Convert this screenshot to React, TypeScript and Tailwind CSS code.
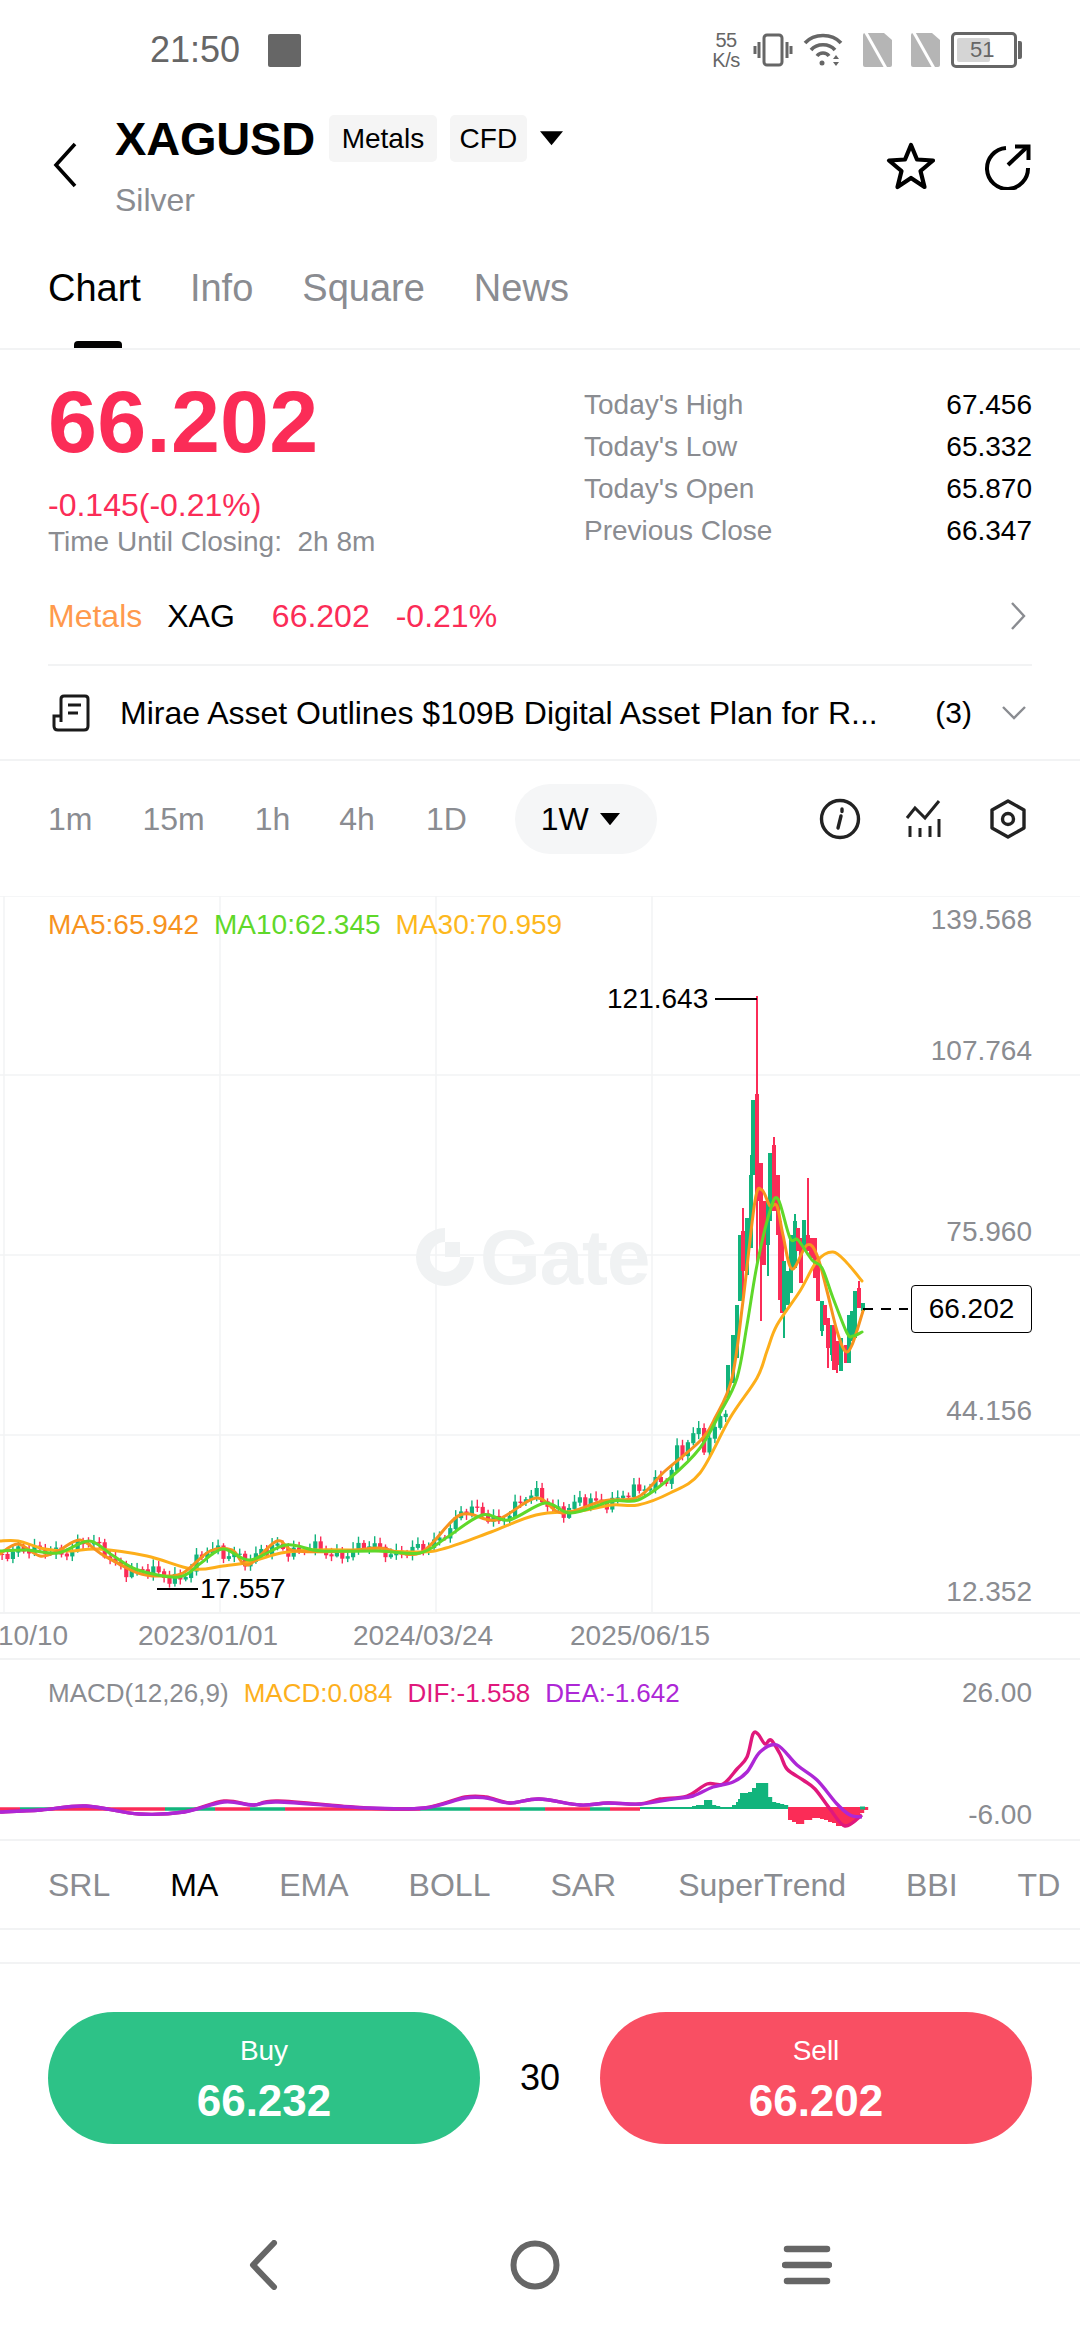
import React from "react";

type P = [number, number];

function smooth(pts: P[]): string {
  let d = `M${pts[0][0]} ${pts[0][1]}`;
  for (let i = 0; i < pts.length - 1; i++) {
    const p0 = pts[Math.max(0, i - 1)];
    const p1 = pts[i];
    const p2 = pts[i + 1];
    const p3 = pts[Math.min(pts.length - 1, i + 2)];
    const c1x = p1[0] + (p2[0] - p0[0]) / 6;
    const c1y = p1[1] + (p2[1] - p0[1]) / 6;
    const c2x = p2[0] - (p3[0] - p1[0]) / 6;
    const c2y = p2[1] - (p3[1] - p1[1]) / 6;
    d += `C${c1x.toFixed(1)} ${c1y.toFixed(1)} ${c2x.toFixed(1)} ${c2y.toFixed(1)} ${p2[0]} ${p2[1]}`;
  }
  return d;
}

function interp(pts: P[], x: number): number {
  for (let i = 0; i < pts.length - 1; i++) {
    if (x >= pts[i][0] && x <= pts[i + 1][0]) {
      const t = (x - pts[i][0]) / (pts[i + 1][0] - pts[i][0]);
      return pts[i][1] + t * (pts[i + 1][1] - pts[i][1]);
    }
  }
  return pts[pts.length - 1][1];
}

const ma5: P[] = [[0,1556],[18,1546],[40,1558],[58,1553],[80,1542],[103,1557],[138,1575],[161,1578],[183,1575],[210,1553],[232,1552],[248,1567],[277,1543],[295,1553],[348,1553],[379,1550],[420,1555],[460,1517],[496,1522],[536,1500],[562,1515],[603,1503],[638,1499],[665,1473],[700,1443],[715,1420],[732,1380],[743,1303],[755,1203],[762,1192],[770,1208],[777,1208],[783,1237],[792,1271],[807,1247],[817,1257],[827,1293],[837,1333],[845,1353],[852,1347],[863,1313]];
const ma10: P[] = [[0,1553],[27,1552],[58,1555],[89,1543],[112,1557],[138,1572],[179,1579],[201,1565],[223,1551],[250,1562],[286,1547],[321,1553],[379,1553],[420,1555],[446,1540],[482,1517],[509,1522],[545,1505],[571,1515],[612,1503],[638,1502],[670,1480],[700,1450],[720,1415],[737,1380],[747,1327],[757,1267],[770,1213],[778,1201],[790,1240],[798,1242],[812,1262],[822,1270],[833,1300],[847,1335],[853,1338],[862,1334]];
const ma30: P[] = [[0,1543],[18,1543],[45,1551],[71,1553],[98,1551],[147,1558],[192,1571],[223,1568],[250,1564],[281,1555],[312,1552],[357,1552],[420,1554],[446,1550],[491,1534],[536,1517],[580,1513],[612,1507],[638,1507],[670,1495],[700,1475],[730,1420],[757,1380],[767,1353],[777,1327],[800,1293],[817,1263],[833,1254],[847,1265],[862,1283]];

const dif: P[] = [[0,1815],[41,1813],[86,1809],[139,1817],[184,1815],[224,1804],[253,1808],[278,1804],[367,1811],[424,1811],[465,1800],[486,1800],[510,1806],[539,1802],[580,1808],[608,1806],[640,1807],[660,1802],[687,1799],[707,1787],[723,1787],[737,1772],[747,1760],[753,1737],[758,1737],[765,1747],[771,1743],[780,1757],[787,1772],[803,1783],[815,1792],[830,1812],[845,1829],[862,1818]];
const dea: P[] = [[0,1815],[41,1813],[86,1809],[139,1817],[184,1815],[224,1805],[253,1808],[278,1805],[367,1811],[424,1811],[465,1801],[486,1801],[510,1806],[539,1802],[580,1808],[608,1806],[640,1807],[673,1802],[693,1799],[713,1790],[733,1785],[747,1775],[760,1755],[777,1748],[797,1768],[817,1783],[837,1807],[850,1818],[862,1820]];

const G = "#12b47c";
const R = "#fb2c57";

// x, bodyTop, bodyBottom, colour, wickTop, wickBottom
const peak: [number, number, number, string, number, number][] = [
  [728,1367,1400,G,1367,1400],[733,1337,1385,G,1337,1385],[737,1307,1360,G,1307,1360],[740,1237,1303,G,1237,1303],
  [743,1233,1273,R,1210,1300],[747,1220,1277,G,1220,1277],[751,1177,1250,G,1157,1250],[753,1102,1177,G,1102,1177],
  [757,1096,1203,R,998,1267],[761,1165,1260,R,1165,1323],[764,1203,1267,R,1203,1267],[768,1200,1247,G,1200,1278],
  [770,1155,1223,G,1155,1223],[774,1147,1213,R,1139,1213],[778,1177,1237,R,1177,1237],[780,1223,1302,R,1223,1302],
  [782,1237,1315,R,1237,1315],[784,1263,1313,G,1263,1340],[788,1273,1307,G,1273,1307],[791,1237,1295,G,1237,1295],
  [795,1223,1270,G,1216,1270],[798,1230,1253,R,1230,1253],[801,1240,1285,R,1240,1285],[804,1222,1250,G,1222,1250],
  [808,1237,1253,R,1180,1253],[811,1240,1260,R,1240,1260],[815,1240,1280,R,1240,1280],[818,1260,1303,R,1260,1303],
  [822,1303,1333,G,1303,1338],[825,1307,1327,R,1307,1327],[828,1320,1350,R,1320,1370],[832,1327,1357,G,1327,1363],
  [834,1327,1372,R,1327,1372],[837,1343,1367,R,1343,1375],[841,1340,1373,G,1340,1373],[846,1347,1365,R,1347,1365],
  [849,1317,1365,G,1317,1365],[852,1313,1343,G,1313,1343],[855,1293,1340,G,1293,1340],[859,1290,1310,R,1283,1310],
  [863,1305,1313,G,1305,1313],
];

function buildCandles() {
  const out: { x: number; t: number; b: number; c: string; wt: number; wb: number }[] = [];
  let prev = interp(ma5, 0);
  let i = 0;
  for (let x = 0; x < 726; x += 5.4) {
    const slope = x > 660 ? 2.2 : 1;
    const close =
      interp(ma5, x) - (x > 440 && x < 700 ? 3 : 0) +
      (Math.sin(i * 1.7) * 4 + Math.sin(i * 0.63) * 5 + Math.sin(i * 3.1) * 2) * slope;
    const t = Math.min(prev, close);
    const b = Math.max(prev, close) + 1;
    out.push({
      x,
      t,
      b,
      c: close < prev ? G : R,
      wt: t - 2 - Math.abs(Math.sin(i * 2.3)) * 5,
      wb: b + 1 + Math.abs(Math.cos(i * 1.9)) * 4,
    });
    prev = close;
    i++;
  }
  return out;
}
const candles = buildCandles();

const hist: [number, number][] = [
  [640,1],[644,1],[648,1],[652,1],[656,1],[660,1],[664,1],[668,1],[672,1],[676,1],[680,1],[684,1],[688,1],[692,2],[696,3],[700,3],[704,8],[708,8],[712,3],[716,2],[720,1],[724,1],[728,1],[732,3],[736,6],[738,9],[740,15],[744,15],[748,16],[752,20],[756,25],[760,25],[764,25],[768,11],[772,6],[776,5],[780,4],[784,3],
  [788,-12],[792,-14],[796,-16],[800,-16],[804,-12],[808,-12],[812,-10],[816,-10],[820,-11],[824,-12],[828,-14],[832,-15],[836,-18],[840,-18],[844,-17],[848,-17],[852,-14],[856,-8],[860,-5],[864,-2],
];

const labelGray = "text-[#8a8c91]";

function Back() {
  return (
    <svg width="30" height="48" viewBox="0 0 30 48" fill="none">
      <path d="M25 3 L6 24 L25 45" stroke="#000" strokeWidth="3.6" />
    </svg>
  );
}

function Star() {
  return (
    <svg width="52" height="50" viewBox="0 0 52 50" fill="none">
      <path d="M26 4 L32 18.5 L48 19.5 L35.5 30 L39.5 46 L26 37 L12.5 46 L16.5 30 L4 19.5 L20 18.5 Z" stroke="#000" strokeWidth="4.2" strokeLinejoin="round" />
    </svg>
  );
}

function Share() {
  return (
    <svg width="48" height="46" viewBox="0 0 48 46" fill="none" stroke="#000" strokeWidth="4">
      <path d="M22 4 A20.5 20.5 0 1 0 44 24" />
      <path d="M24 21 L43 3" />
      <path d="M31 2.5 H44.5 V16" />
    </svg>
  );
}

function StatusIcons() {
  const c = "#666";
  return (
    <div className="flex items-center">
      <div className="w-[38px] flex flex-col items-center text-[20px] leading-[20px] text-[#666] tracking-tight">
        <span>55</span>
        <span>K/s</span>
      </div>
      <svg className="ml-[8px]" width="40" height="36" viewBox="0 0 40 36" fill="none" stroke={c} strokeWidth="3">
        <rect x="11" y="3" width="18" height="30" rx="3" />
        <path d="M6 10 V26 M2 14 V22 M34 10 V26 M38 14 V22" />
      </svg>
      <svg className="ml-[10px]" width="40" height="36" viewBox="0 0 40 36" fill="none" stroke={c} strokeWidth="3.6">
        <path d="M2 11 C11 1 29 1 38 11" />
        <path d="M8 18 C14 11 26 11 32 18" />
        <path d="M14 24 C17 20 23 20 26 24" />
        <circle cx="19" cy="31" r="2.5" fill={c} stroke="none" />
        <path d="M30 27 L33 23 L36 27 Z M30 30 L33 34 L36 30 Z" fill={c} stroke="none" />
      </svg>
      <svg className="ml-[18px]" width="34" height="36" viewBox="0 0 34 36" fill="none">
        <path d="M2 3 Q2 1 4 1 H23 L31 8 V33 Q31 35 29 35 H4 Q2 35 2 33 Z" fill="#b5b5b5" />
        <path d="M4 -1 L26 38" stroke="#fff" strokeWidth="3" />
      </svg>
      <svg className="ml-[14px]" width="34" height="36" viewBox="0 0 34 36" fill="none">
        <path d="M2 3 Q2 1 4 1 H23 L31 8 V33 Q31 35 29 35 H4 Q2 35 2 33 Z" fill="#b5b5b5" />
        <path d="M4 -1 L26 38" stroke="#fff" strokeWidth="3" />
      </svg>
      <div className="ml-[8px] flex items-center">
        <div className="relative w-[66px] h-[36px] rounded-[5px] border-[3px] border-[#666] flex items-center overflow-hidden">
          <div className="w-[33px] h-[24px] ml-[3px] bg-[#d5d5d5] rounded-[2px]" />
          <span className="absolute left-[16px] top-[3px] text-[22px] leading-[24px] text-[#666]">51</span>
        </div>
        <div className="ml-[1px] w-[4px] h-[18px] bg-[#666] rounded-r-[2px]" />
      </div>
    </div>
  );
}

function Caret({ s = 23 }: { s?: number }) {
  return (
    <svg width={s} height={s * 0.62} viewBox="0 0 23 14">
      <path d="M0 0 H23 L11.5 14 Z" fill="#000" />
    </svg>
  );
}

function Stat({ l, v }: { l: string; v: string }) {
  return (
    <div className="flex justify-between h-[42px] items-center text-[28px]">
      <span className={labelGray}>{l}</span>
      <span className="text-black">{v}</span>
    </div>
  );
}

function MainChart() {
  return (
    <div className="relative h-[718px] border-b-2 border-[#f2f3f4]">
      <svg className="absolute left-0 top-0" width="1080" height="718" viewBox="0 898 1080 718" fill="none">
        {[898, 1077, 1257, 1437].map((y) => (
          <path key={y} d={`M0 ${y} H1080`} stroke="#f2f3f4" strokeWidth="1.5" />
        ))}
        {[4, 220, 436, 652].map((x) => (
          <path key={x} d={`M${x} 898 V1616`} stroke="#f2f3f4" strokeWidth="1.5" />
        ))}
        {candles.map((k, i) => (
          <g key={i}>
            <rect x={k.x + 1.4} y={k.wt} width="1.4" height={k.wb - k.wt} fill={k.c} />
            <rect x={k.x} y={k.t} width="4.2" height={k.b - k.t} fill={k.c} />
          </g>
        ))}
        {peak.map(([x, t, b, c, wt, wb], i) => (
          <g key={i}>
            <rect x={x - 1} y={wt} width="2" height={wb - wt} fill={c} />
            <rect x={x - 2} y={t} width="4" height={b - t} fill={c} />
          </g>
        ))}
        <path d={smooth(ma30)} stroke="#fdae1a" strokeWidth="3" strokeLinejoin="round" strokeLinecap="round" />
        <path d={smooth(ma5)} stroke="#f7931e" strokeWidth="3" strokeLinejoin="round" strokeLinecap="round" />
        <path d={smooth(ma10)} stroke="#5fd82a" strokeWidth="3" strokeLinejoin="round" strokeLinecap="round" />
        <path d="M715 1001 H757" stroke="#000" strokeWidth="2" />
        <path d="M157 1591 H198" stroke="#000" strokeWidth="2" />
        <path d="M863 1311 H908" stroke="#000" strokeWidth="2" strokeDasharray="10 8" />
      </svg>

      <div className="absolute left-[416px] top-[322px] flex items-center gap-[6px] text-[#f0f2f3]">
        <svg width="58" height="58" viewBox="0 0 58 58">
          <path d="M29 0 A29 29 0 1 0 58 29 H44 A15 15 0 1 1 29 14 Z" fill="#f0f2f3" />
          <rect x="29" y="14" width="15" height="15" fill="#f0f2f3" />
        </svg>
        <span className="text-[78px] leading-[78px] font-bold tracking-[-1px]">Gate</span>
      </div>

      <div className="absolute left-[48px] top-[12px] flex gap-[15px] text-[28px] leading-[34px]">
        <span className="text-[#f7931e]">MA5:65.942</span>
        <span className="text-[#5fd82a]">MA10:62.345</span>
        <span className="text-[#fdb81d]">MA30:70.959</span>
      </div>

      {[
        ["139.568", 7],
        ["107.764", 138],
        ["75.960", 319],
        ["44.156", 498],
        ["12.352", 679],
      ].map(([t, top]) => (
        <span key={t as string} className={`absolute right-[48px] text-[28px] leading-[34px] ${labelGray}`} style={{ top: top as number }}>
          {t}
        </span>
      ))}

      <span className="absolute left-[607px] top-[86px] text-[28px] leading-[34px] text-black">121.643</span>
      <span className="absolute left-[200px] top-[676px] text-[28px] leading-[34px] text-black">17.557</span>
      <div className="absolute left-[911px] top-[389px] w-[121px] h-[48px] border-[1.5px] border-black rounded-[4px] bg-white flex items-center justify-center text-[28px] text-black">
        66.202
      </div>
    </div>
  );
}

function Macd() {
  return (
    <div className="relative h-[181px] border-b-2 border-[#f2f3f4]">
      <svg className="absolute left-0 top-0" width="1080" height="181" viewBox="0 1663 1080 181" fill="none">
        {[
          [0, 20, R], [20, 50, G], [50, 165, R], [165, 215, G], [215, 250, R], [250, 285, G], [285, 420, R], [420, 470, G], [470, 520, R], [520, 545, G], [545, 590, R], [590, 610, G], [610, 640, R],
        ].map(([a, b, c], i) => (
          <path key={i} d={`M${a} 1812 H${b}`} stroke={c as string} strokeWidth="3.5" />
        ))}
        {hist.map(([x, h], i) => (
          <rect key={i} x={x} y={h >= 0 ? 1811 - h : 1810} width="4.2" height={Math.abs(h) + 1} fill={h >= 0 ? G : R} />
        ))}
        <path d="M860 1811 H865" stroke={G} strokeWidth="3" />
        <path d={smooth(dif)} stroke="#e0187c" strokeWidth="3.4" strokeLinejoin="round" />
        <path d={smooth(dea)} stroke="#ad27d6" strokeWidth="3.4" strokeLinejoin="round" />
      </svg>
      <div className="absolute left-[48px] top-[18px] flex gap-[15px] text-[26px] leading-[30px]">
        <span className={labelGray}>MACD(12,26,9)</span>
        <span className="text-[#fdb01d]">MACD:0.084</span>
        <span className="text-[#e0187c]">DIF:-1.558</span>
        <span className="text-[#ad27d6]">DEA:-1.642</span>
      </div>
      <span className={`absolute right-[48px] top-[18px] text-[28px] leading-[30px] ${labelGray}`}>26.00</span>
      <span className={`absolute right-[48px] top-[140px] text-[28px] leading-[30px] ${labelGray}`}>-6.00</span>
    </div>
  );
}

export default function App() {
  const fam = "font-['Liberation_Sans',Arial,sans-serif]";
  return (
    <div className={`w-[1080px] h-[2340px] bg-white overflow-hidden flex flex-col ${fam}`}>
      {/* status bar */}
      <div className="h-[100px] shrink-0 flex items-center pl-[150px] pr-[58px]">
        <span className="text-[36px] text-[#666] font-medium">21:50</span>
        <div className="ml-[28px] w-[33px] h-[33px] bg-[#666] rounded-[2px]" />
        <div className="ml-auto">
          <StatusIcons />
        </div>
      </div>

      {/* header */}
      <div className="h-[130px] shrink-0 flex pl-[50px] pr-[48px]">
        <div className="mt-[41px] w-[30px]">
          <Back />
        </div>
        <div className="ml-[35px] flex flex-col">
          <div className="flex items-center mt-[15px] h-[47px]">
            <span className="text-[47px] leading-[47px] font-bold text-black tracking-[-0.2px]">XAGUSD</span>
            <span className="ml-[14px] h-[47px] w-[108px] bg-[#f5f5f5] rounded-[5px] flex items-center justify-center text-[28px] text-black">Metals</span>
            <span className="ml-[13px] h-[47px] w-[77px] bg-[#f5f5f5] rounded-[5px] flex items-center justify-center text-[28px] text-black">CFD</span>
            <span className="ml-[13px] flex"><Caret /></span>
          </div>
          <span className={`mt-[20px] text-[32px] leading-[36px] ${labelGray}`}>Silver</span>
        </div>
        <div className="ml-auto flex items-start mt-[41px]">
          <Star />
          <div className="ml-[47px] mt-[3px]"><Share /></div>
        </div>
      </div>

      {/* tabs */}
      <div className="h-[120px] shrink-0 relative border-b-2 border-[#f2f3f4] flex items-start gap-[49px] px-[48px] pt-[36px] text-[38px] leading-[44px]">
        <span className="text-black">Chart</span>
        <span className={labelGray}>Info</span>
        <span className={labelGray}>Square</span>
        <span className={labelGray}>News</span>
        <div className="absolute left-[74px] bottom-0 w-[48px] h-[7px] bg-black rounded-t-[4px]" />
      </div>

      {/* summary */}
      <div className="h-[188px] shrink-0 flex px-[48px]">
        <div className="w-[536px] flex flex-col">
          <span className="mt-[32px] text-[88px] leading-[80px] font-bold text-[#fb2c57] tracking-[0.2px]">66.202</span>
          <span className="mt-[25px] text-[32px] leading-[36px] text-[#fb2c57]">-0.145(-0.21%)</span>
          <span className={`mt-[2px] text-[28px] leading-[34px] ${labelGray}`}>Time Until Closing:&nbsp; 2h 8m</span>
        </div>
        <div className="flex-1 pt-[34px]">
          <Stat l="Today's High" v="67.456" />
          <Stat l="Today's Low" v="65.332" />
          <Stat l="Today's Open" v="65.870" />
          <Stat l="Previous Close" v="66.347" />
        </div>
      </div>

      {/* metals row */}
      <div className="h-[128px] shrink-0 mx-[48px] border-b-2 border-[#f2f3f4] flex items-center text-[32px] leading-[36px] pt-[30px] pb-0">
        <span className="text-[#ff9a4d]">Metals</span>
        <span className="ml-[25px] text-black">XAG</span>
        <span className="ml-[37px] text-[#fb2c57]">66.202</span>
        <span className="ml-[26px] text-[#fb2c57]">-0.21%</span>
        <svg className="ml-auto mr-[6px]" width="16" height="30" viewBox="0 0 16 30" fill="none">
          <path d="M2 2 L14 15 L2 28" stroke="#8a8c91" strokeWidth="2.4" />
        </svg>
      </div>

      {/* news row */}
      <div className="h-[95px] shrink-0 border-b-2 border-[#f2f3f4] flex items-center pl-[52px] pr-[54px]">
        <svg width="38" height="38" viewBox="0 0 38 38" fill="none" stroke="#1a1a1a" strokeWidth="3">
          <path d="M9 28 V5 Q9 2 12 2 H33 Q36 2 36 5 V32 Q36 36 32 36 H6 Q2 36 2 32 V22 H9" />
          <path d="M16 11 H29 M16 19 H26" />
        </svg>
        <span className="ml-[30px] text-[32px] text-black leading-[36px]">Mirae Asset Outlines $109B Digital Asset Plan for R...</span>
        <span className="ml-auto text-[30px] text-black font-medium">(3)</span>
        <svg className="ml-[30px]" width="24" height="14" viewBox="0 0 24 14" fill="none">
          <path d="M1 1 L12 12 L23 1" stroke="#8a8c91" strokeWidth="2.4" />
        </svg>
      </div>

      {/* periods */}
      <div className="h-[135px] shrink-0 flex items-start pl-[48px] pr-[54px] text-[32px]">
        <div className="flex items-center h-[116px] w-full">
          <span className={labelGray}>1m</span>
          <span className={`ml-[50px] ${labelGray}`}>15m</span>
          <span className={`ml-[50px] ${labelGray}`}>1h</span>
          <span className={`ml-[49px] ${labelGray}`}>4h</span>
          <span className={`ml-[51px] ${labelGray}`}>1D</span>
          <div className="ml-[48px] w-[142px] h-[70px] rounded-full bg-[#f5f6f7] flex items-center pl-[26px] text-black">
            <span>1W</span>
            <span className="ml-[11px] flex"><Caret s={20} /></span>
          </div>
          <svg className="ml-auto" width="42" height="42" viewBox="0 0 42 42" fill="none">
            <circle cx="21" cy="21" r="18.5" stroke="#222" strokeWidth="3.4" />
            <path d="M22 18 L19 30 M23 11 V13.5" stroke="#222" strokeWidth="3.4" strokeLinecap="round" />
          </svg>
          <svg className="ml-[44px]" width="38" height="40" viewBox="0 0 38 40" fill="none" stroke="#222" strokeWidth="3">
            <path d="M2 19 L10 9 L20 19 L34 2" />
            <path d="M5 27 V38 M15 29 V38 M25 27 V38 M34 20 V38" />
          </svg>
          <svg className="ml-[47px]" width="36" height="40" viewBox="0 0 36 40" fill="none" stroke="#222" strokeWidth="3.4">
            <path d="M18 2 L34 11 V29 L18 38 L2 29 V11 Z" strokeLinejoin="round" />
            <circle cx="18" cy="20" r="5.5" />
          </svg>
        </div>
      </div>

      <MainChart />

      {/* date axis */}
      <div className={`relative h-[46px] shrink-0 border-b-2 border-[#f2f3f4] text-[28px] ${labelGray}`}>
        <div className="flex items-center h-full -ml-[2px]">
          <span className="w-[140px]">10/10</span>
          <span className="w-[215px]">2023/01/01</span>
          <span className="w-[217px]">2024/03/24</span>
          <span>2025/06/15</span>
        </div>
      </div>

      <Macd />

      {/* indicators */}
      <div className={`h-[89px] shrink-0 border-b-2 border-[#f2f3f4] flex items-center pl-[48px] text-[32px] whitespace-nowrap ${labelGray}`}>
        <span>SRL</span>
        <span className="ml-[60px] text-black">MA</span>
        <span className="ml-[61px]">EMA</span>
        <span className="ml-[60px]">BOLL</span>
        <span className="ml-[60px]">SAR</span>
        <span className="ml-[62px]">SuperTrend</span>
        <span className="ml-[60px]">BBI</span>
        <span className="ml-[60px]">TD</span>
      </div>

      <div className="h-[34px] shrink-0 border-b-2 border-[#f2f3f4]" />

      {/* trade */}
      <div className="shrink-0 flex items-center px-[48px] pt-[48px]">
        <div className="w-[432px] h-[132px] rounded-full bg-[#2dc287] flex flex-col items-center text-white">
          <span className="mt-[22px] text-[28px] leading-[34px]">Buy</span>
          <span className="mt-[8px] text-[44px] leading-[50px] font-bold">66.232</span>
        </div>
        <span className="flex-1 text-center text-[36px] text-black">30</span>
        <div className="w-[432px] h-[132px] rounded-full bg-[#f94f63] flex flex-col items-center text-white">
          <span className="mt-[22px] text-[28px] leading-[34px]">Sell</span>
          <span className="mt-[8px] text-[44px] leading-[50px] font-bold">66.202</span>
        </div>
      </div>

      {/* nav */}
      <div className="flex-1 flex items-start justify-center pt-[96px]">
        <svg className="mr-[232px]" width="30" height="50" viewBox="0 0 30 50" fill="none">
          <path d="M26 3 L5 25 L26 47" stroke="#666" strokeWidth="6" strokeLinecap="round" strokeLinejoin="round" />
        </svg>
        <svg width="50" height="50" viewBox="0 0 50 50" fill="none">
          <circle cx="25" cy="25" r="21.5" stroke="#666" strokeWidth="6" />
        </svg>
        <svg className="ml-[222px] mt-[5px]" width="50" height="40" viewBox="0 0 50 40" fill="none" stroke="#666" strokeWidth="6.5" strokeLinecap="round">
          <path d="M5 4 H45 M3 20 H47 M5 36 H45" />
        </svg>
      </div>
    </div>
  );
}
